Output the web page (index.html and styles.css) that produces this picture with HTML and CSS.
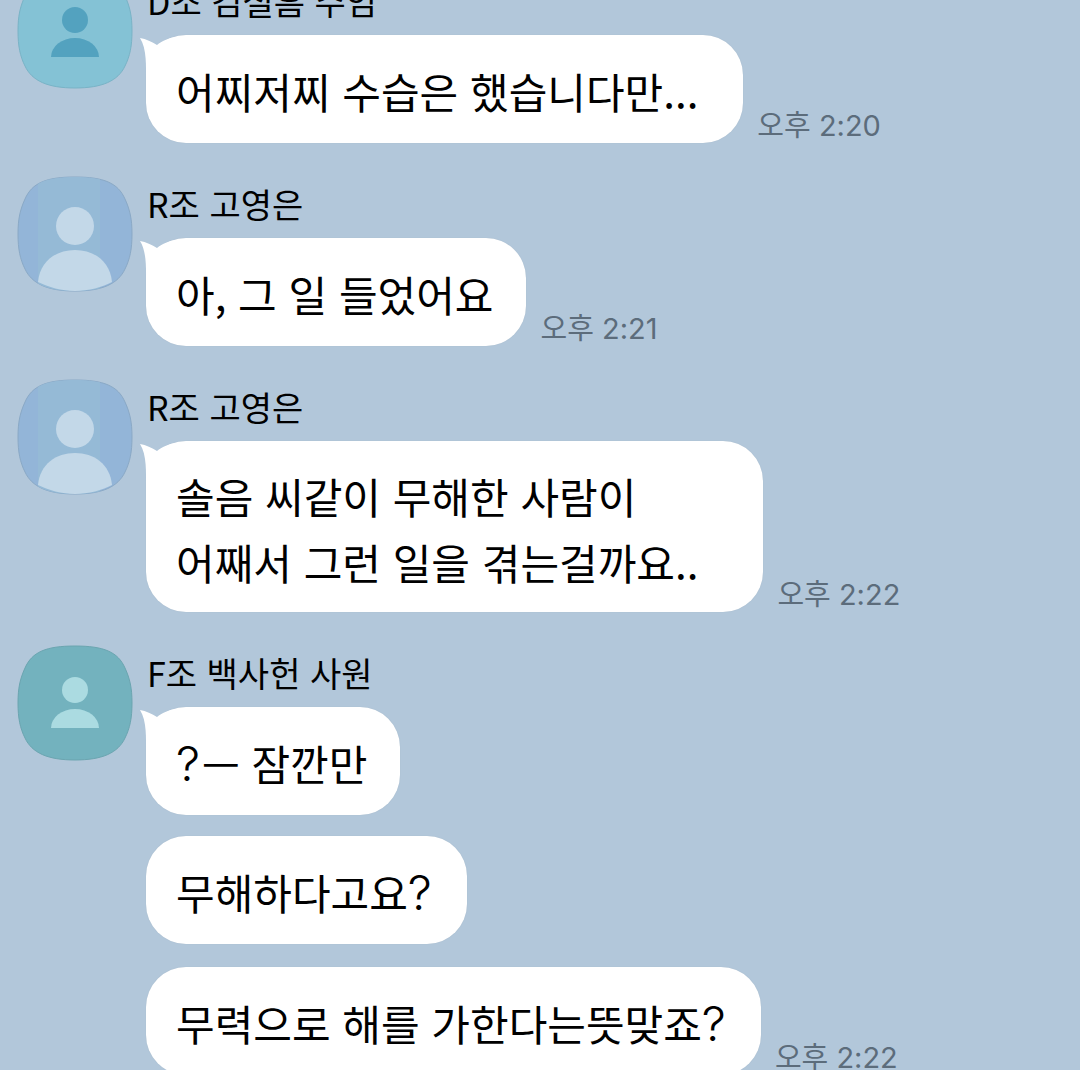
FILE: index.html
```html
<!DOCTYPE html>
<html lang="ko">
<head>
<meta charset="utf-8">
<title>채팅</title>
<link rel="stylesheet" href="styles.css">
</head>
<body>
<svg class="defs" width="0" height="0" aria-hidden="true">
  <defs>
    <path id="squircle" d="M57 0C28 0 14 6 7 22C2 33 0 42 0 57C0 72 2 82 7 92C14 107 30 114 57 114C84 114 100 107 107 92C112 82 114 72 114 57C114 42 112 33 107 22C100 6 86 0 57 0Z"/>
    <clipPath id="squircle-clip"><use href="#squircle"/></clipPath>
    <path id="tail" d="M0 3C6 4 12 7 17 10C22 6 28 3 36 2V44H6C6 32 7 14 0 3Z"/>
  </defs>
</svg>
<main class="chat">
  <section class="group">
    <svg class="avatar" viewBox="0 0 114 114">
      <use href="#squircle" fill="#84c2d5" stroke="#79b3c6"/>
      <circle cx="57" cy="46" r="13" fill="#53a2bf"/>
      <path d="M33 83a24 19 0 0 1 48 0z" fill="#53a2bf"/>
    </svg>
    <div class="content">
      <div class="name">D조 김철흠 주임</div>
      <div class="row">
        <div class="bubble pad-dots">어찌저찌 수습은 했습니다만...<svg class="tail-mark" viewBox="0 0 36 44"><use href="#tail"/></svg></div>
        <time class="time">오후 2:20</time>
      </div>
    </div>
  </section>
  <section class="group">
    <svg class="avatar" viewBox="0 0 114 114">
      <use href="#squircle" fill="#93b5d8" stroke="#8aa9c6"/>
      <g clip-path="url(#squircle-clip)">
        <path d="M20 0H82V114H20Z" fill="#95bad6"/>
        <circle cx="57" cy="49" r="19" fill="#c3d8e8"/>
        <path d="M20 105C22 84 38 73 57 73C76 73 92 84 94 105C85 110 70 114 57 114C44 114 30 110 20 105Z" fill="#c3d8e8"/>
      </g>
    </svg>
    <div class="content">
      <div class="name">R조 고영은</div>
      <div class="row">
        <div class="bubble">아, 그 일 들었어요<svg class="tail-mark" viewBox="0 0 36 44"><use href="#tail"/></svg></div>
        <time class="time">오후 2:21</time>
      </div>
    </div>
  </section>
  <section class="group">
    <svg class="avatar" viewBox="0 0 114 114">
      <use href="#squircle" fill="#93b5d8" stroke="#8aa9c6"/>
      <g clip-path="url(#squircle-clip)">
        <path d="M20 0H82V114H20Z" fill="#95bad6"/>
        <circle cx="57" cy="49" r="19" fill="#c3d8e8"/>
        <path d="M20 105C22 84 38 73 57 73C76 73 92 84 94 105C85 110 70 114 57 114C44 114 30 110 20 105Z" fill="#c3d8e8"/>
      </g>
    </svg>
    <div class="content">
      <div class="name">R조 고영은</div>
      <div class="row">
        <div class="bubble two-line">솔음 씨같이 무해한 사람이<br>어째서 그런 일을 겪는걸까요..<svg class="tail-mark" viewBox="0 0 36 44"><use href="#tail"/></svg></div>
        <time class="time">오후 2:22</time>
      </div>
    </div>
  </section>
  <section class="group">
    <svg class="avatar" viewBox="0 0 114 114">
      <use href="#squircle" fill="#73b2be" stroke="#6ba5b0"/>
      <circle cx="57" cy="44" r="13" fill="#abdbe1"/>
      <path d="M33 82a24 19 0 0 1 48 0z" fill="#abdbe1"/>
    </svg>
    <div class="content">
      <div class="name">F조 백사헌 사원</div>
      <div class="stack">
        <div class="row">
          <div class="bubble"><span class="latin">?</span>— 잠깐만<svg class="tail-mark" viewBox="0 0 36 44"><use href="#tail"/></svg></div>
        </div>
        <div class="row">
          <div class="bubble">무해하다고요<span class="latin">?</span></div>
        </div>
        <div class="row row-last">
          <div class="bubble">무력으로 해를 가한다는뜻맞죠<span class="latin">?</span></div>
          <time class="time">오후 2:22</time>
        </div>
      </div>
    </div>
  </section>
</main>
</body>
</html>
```

FILE: styles.css
```css
* { box-sizing: border-box; }
html, body { margin: 0; height: 1070px; overflow: hidden; background: #b2c7da; }
body { font-family: "Noto Sans CJK KR", "Noto Sans", sans-serif; color: #000; }
.defs { position: absolute; }
.chat {
  display: flex;
  flex-direction: column;
  gap: 34px;
  margin-top: -26px;
  padding-left: 18px;
}
.group { display: flex; gap: 14px; align-items: flex-start; }
.avatar { width: 114px; height: 114px; flex: none; overflow: visible; }
.content { display: flex; flex-direction: column; gap: 9px; min-width: 0; }
.name {
  height: 52px;
  padding-left: 1px;
  padding-top: 2px;
  font-size: 34px;
  line-height: 50px;
  white-space: nowrap;
}
.stack { display: flex; flex-direction: column; gap: 21px; }
.row { display: flex; align-items: flex-end; gap: 14px; }
.row-last { margin-top: 2px; }
.bubble {
  position: relative;
  background: #fff;
  border-radius: 40px;
  padding: 23px 33px 19px 30px;
  box-shadow: 0 0 1px #9fb3c4;
  font-size: 42px;
  line-height: 66px;
  white-space: nowrap;
}
.pad-dots { padding-right: 45px; }
.two-line { padding-top: 21.5px; padding-bottom: 17.5px; padding-right: 65px; }
.latin {
  font-family: "Inter", "Noto Sans CJK KR", sans-serif;
  font-size: 48px;
  font-weight: 300;
  line-height: 0;
  letter-spacing: 2px;
}
.tail-mark {
  position: absolute;
  left: -6px;
  top: 0;
  width: 36px;
  height: 44px;
  fill: #fff;
}
.time {
  font-family: "Inter", "Noto Sans CJK KR", sans-serif;
  font-size: 29px;
  line-height: 34px;
  color: #5c6c7b;
  white-space: nowrap;
}
```
